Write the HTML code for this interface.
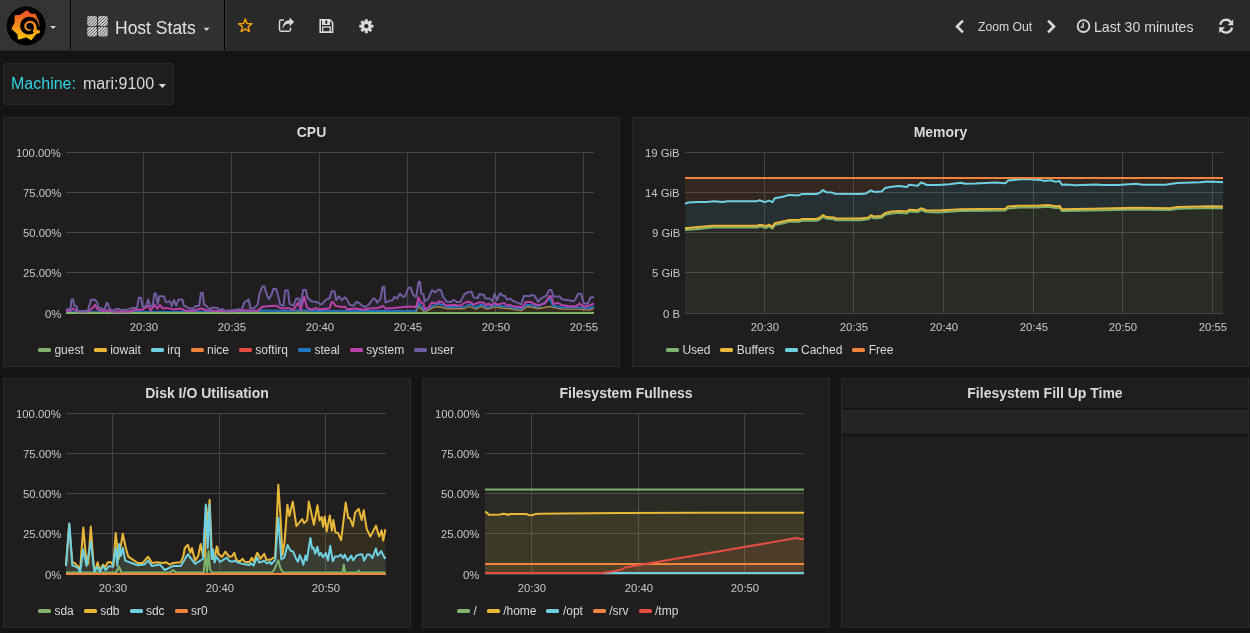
<!DOCTYPE html><html><head><meta charset="utf-8"><style>
*{margin:0;padding:0;box-sizing:border-box}
html,body{width:1250px;height:633px;overflow:hidden;background:#141414;font-family:"Liberation Sans", sans-serif;color:#d8d9da}
.a{position:absolute}
.t{position:absolute;white-space:nowrap;line-height:1;will-change:transform}
.panel{position:absolute;background:#1f1d1e;border:1px solid #292929}
.ptitle{position:absolute;left:0;right:0;text-align:center;font-weight:bold;font-size:14px;color:#d8d9da;line-height:1;will-change:transform}
.yl{position:absolute;font-size:11.33px;color:#c8c8c8;text-align:right;white-space:nowrap;line-height:1;will-change:transform}
.xl{position:absolute;font-size:11.33px;color:#c8c8c8;text-align:center;white-space:nowrap;line-height:1;width:40px;will-change:transform}
.leg{position:absolute;font-size:12px;color:#d8d9da;white-space:nowrap;line-height:1}
.sw{position:absolute;height:4px;width:14px;border-radius:2px}
svg{position:absolute;left:0;top:0;overflow:visible}
.legend{position:absolute;white-space:nowrap;font-size:12px;line-height:14px;color:#d8d9da;will-change:transform}
.li{display:inline-block;margin-right:10px}
.li i{display:inline-block;width:13px;height:4px;border-radius:1.5px;margin-right:3.4px;vertical-align:2px}
</style></head><body>

<div class="a" style="left:0;top:0;width:1250px;height:51px;background:#292929"></div>
<div class="a" style="left:0;top:0;width:70px;height:50px;background:#333"></div>
<div class="a" style="left:70px;top:0;width:1px;height:50px;background:#000"></div>
<div class="a" style="left:71px;top:0;width:153px;height:50px;background:#313131"></div>
<div class="a" style="left:224px;top:0;width:1px;height:50px;background:#000"></div>
<div class="a" style="left:225px;top:0;width:1px;height:50px;background:#303030"></div>
<div class="a" style="left:71px;top:0;width:1px;height:50px;background:#393939"></div>
<svg width="1250" height="51" viewBox="0 0 1250 51">
<defs><linearGradient id="lg" gradientUnits="userSpaceOnUse" x1="0" y1="11" x2="0" y2="40"><stop offset="0.1" stop-color="#F05A28"/><stop offset="1" stop-color="#FBCA0A"/></linearGradient>
<pattern id="hatch" width="2.2" height="2.2" patternUnits="userSpaceOnUse" patternTransform="rotate(45)"><rect width="2.2" height="2.2" fill="#d8d9da"/><rect width="0.8" height="2.2" fill="#555"/></pattern></defs>
<circle cx="26.2" cy="26" r="19.5" fill="#000"/>
<path fill="url(#lg)" stroke="url(#lg)" stroke-width="1.4" stroke-linejoin="round" d="M26.9,10.9 L30.4,14.3 L35.2,14.5 L36.4,17.8 L38.1,21.2 L38.8,24.8 L38.0,27.6 L39.3,32.3 L35.8,33.6 L31.2,39.4 L26.6,36.6 L18.8,38.9 L17.9,33.6 L12.2,28.6 L15.2,23.2 L15.2,16 L20.5,15.4 Z"/>
<circle cx="28.90" cy="25.70" r="8.90" fill="#000"/>
<path fill="#000" d="M29.68,16.83 L30.10,16.85 L30.53,16.88 L30.96,16.93 L31.39,17.01 L31.82,17.11 L32.24,17.22 L32.66,17.36 L33.07,17.52 L33.47,17.70 L33.87,17.90 L34.26,18.12 L34.64,18.36 L35.01,18.61 L35.36,18.89 L35.71,19.18 L36.04,19.49 L36.36,19.82 L36.66,20.17 L36.94,20.53 L37.21,20.90 L37.46,21.29 L37.69,21.69 L37.90,22.11 L38.10,22.53 L38.27,22.97 L38.42,23.41 L38.55,23.87 L38.66,24.33 L38.74,24.80 L38.80,25.27 L38.85,25.74 L38.86,26.22 L38.91,26.71 L39.05,27.22 L39.17,27.74 L39.26,28.28 L39.32,28.84 L39.35,29.40 L39.35,29.98 L39.32,30.56 L35.24,28.66 L35.38,28.35 L35.50,28.04 L35.60,27.72 L35.69,27.39 L35.77,27.07 L35.82,26.73 L35.86,26.40 L35.89,26.07 L35.90,25.73 L35.89,25.39 L35.87,25.06 L35.83,24.73 L35.78,24.39 L35.71,24.07 L35.62,23.74 L35.52,23.42 L35.40,23.11 L35.27,22.80 L35.12,22.49 L34.96,22.20 L34.79,21.91 L34.60,21.64 L34.40,21.37 L34.18,21.11 L33.96,20.86 L33.72,20.62 L33.47,20.40 L33.21,20.18 L32.94,19.98 L32.66,19.80 L32.37,19.62 L32.08,19.46 L31.78,19.32 L31.47,19.19 L31.15,19.07 L30.83,18.97 L30.50,18.89 L30.18,18.82 L29.84,18.76 L29.51,18.73Z"/>
<path fill="url(#lg)" d="M34.95,34.38 L35.30,33.64 L35.58,32.89 L35.77,32.15 L36.01,31.51 L36.26,30.91 L36.45,30.30 L36.59,29.68 L36.68,29.07 L36.72,28.47 L36.70,27.87 L36.64,27.29 L36.53,26.72 L36.44,26.18 L36.33,25.64 L36.17,25.12 L35.98,24.62 L35.75,24.14 L35.48,23.68 L35.18,23.25 L34.85,22.85 L34.49,22.48 L34.11,22.14 L33.71,21.84 L33.29,21.57 L32.85,21.34 L32.40,21.15 L31.94,20.99 L31.47,20.88 L31.00,20.80 L30.53,20.76 L30.06,20.75 L29.60,20.79 L29.15,20.83 L28.70,20.91 L28.26,21.02 L27.84,21.16 L27.43,21.34 L27.03,21.54 L26.66,21.78 L26.31,22.04 L25.98,22.33 L25.67,22.64 L25.40,22.97 L25.15,23.32 L24.93,23.69 L24.74,24.07 L24.59,24.46 L24.46,24.87 L24.37,25.27 L24.31,25.69 L24.29,26.10 L24.29,26.51 L24.35,26.92 L24.43,27.31 L24.55,27.70 L24.70,28.07 L24.87,28.42 L25.07,28.76 L25.30,29.08 L25.54,29.37 L25.81,29.64 L26.09,29.89 L26.39,30.11 L26.71,30.31 L27.03,30.47 L27.37,30.61 L27.71,30.72 L28.05,30.81 L28.40,30.86 L28.74,30.89 L29.09,30.89 L29.43,30.86 L29.76,30.77 L30.07,30.65 L30.37,30.51 L30.64,30.34 L30.90,30.15 L31.14,29.95 L31.35,29.74 L31.54,29.51 L31.36,29.26 L31.12,29.34 L30.87,29.41 L30.62,29.44 L30.38,29.46 L30.13,29.46 L29.90,29.44 L29.67,29.39 L29.45,29.35 L29.23,29.36 L29.01,29.36 L28.79,29.33 L28.57,29.29 L28.36,29.23 L28.14,29.15 L27.94,29.06 L27.73,28.94 L27.54,28.82 L27.36,28.67 L27.18,28.51 L27.02,28.34 L26.87,28.15 L26.74,27.95 L26.62,27.73 L26.52,27.51 L26.44,27.28 L26.37,27.04 L26.32,26.79 L26.30,26.54 L26.29,26.29 L26.30,26.04 L26.34,25.78 L26.39,25.53 L26.47,25.28 L26.56,25.04 L26.68,24.80 L26.81,24.58 L26.97,24.36 L27.14,24.15 L27.32,23.96 L27.52,23.78 L27.74,23.61 L27.97,23.47 L28.22,23.34 L28.47,23.23 L28.73,23.14 L29.00,23.07 L29.28,23.02 L29.56,22.99 L29.85,22.98 L30.14,22.99 L30.43,23.02 L30.71,23.08 L31.00,23.15 L31.28,23.26 L31.55,23.38 L31.81,23.53 L32.07,23.70 L32.31,23.89 L32.54,24.10 L32.75,24.32 L32.94,24.57 L33.12,24.83 L33.27,25.11 L33.41,25.41 L33.52,25.71 L33.61,26.02 L33.67,26.35 L33.72,26.67 L33.78,27.01 L33.82,27.36 L33.83,27.72 L33.81,28.08 L33.76,28.45 L33.67,28.82 L33.56,29.18 L33.41,29.55 L33.26,29.93 L33.15,30.38 L32.98,30.82 L32.77,31.27Z"/>
<path d="M50,26 L56,26 L53,29 Z" fill="#d8d9da"/>
<rect x="87.2" y="16.1" width="9.8" height="9.9" rx="2" fill="url(#hatch)"/>
<rect x="98" y="16.1" width="9.8" height="9.9" rx="2" fill="url(#hatch)"/>
<rect x="87.2" y="26.8" width="9.8" height="9.6" rx="2" fill="url(#hatch)"/>
<rect x="98" y="26.8" width="9.8" height="9.6" rx="2" fill="url(#hatch)"/>
<path d="M203.6,27.8 L209.5,27.8 L206.55,30.9 Z" fill="#d8d9da"/>
<path d="M245.30,18.90 L247.06,23.47 L251.96,23.74 L248.15,26.83 L249.41,31.56 L245.30,28.90 L241.19,31.56 L242.45,26.83 L238.64,23.74 L243.54,23.47 Z" fill="none" stroke="#F1A20B" stroke-width="1.5" stroke-linejoin="round"/>
<path d="M290.5,27.5 L290.5,29.5 Q290.5,31.2 288.8,31.2 L281.2,31.2 Q279.5,31.2 279.5,29.5 L279.5,21.7 Q279.5,20 281.2,20 L284,20" fill="none" stroke="#d8d9da" stroke-width="1.5"/>
<path d="M282.6,29.8 C282.3,24.5 284.5,20.3 289.6,20.3 L289.6,17.6 L294.2,22 L289.6,26.2 L289.6,23.8 C285.8,23.7 283.6,25.6 282.6,29.8 Z" fill="#d8d9da"/>
<path d="M320.2,19.7 L329.8,19.7 L332.6,22.5 L332.6,32.3 L320.2,32.3 Z" fill="none" stroke="#d8d9da" stroke-width="1.6"/>
<rect x="322" y="19.5" width="8" height="5.5" fill="#d8d9da"/>
<rect x="325.3" y="20.5" width="2" height="3.3" fill="#292929"/>
<rect x="322.7" y="27" width="7.5" height="5" fill="none" stroke="#d8d9da" stroke-width="1.3"/>
<g transform="translate(366.3,26.2)" fill="#d8d9da">
<circle r="5.1"/>
<g id="tooth"><rect x="-1.5" y="-7.0" width="3.0" height="3.3" rx="0.5"/></g>
<use href="#tooth" transform="rotate(45)"/><use href="#tooth" transform="rotate(90)"/><use href="#tooth" transform="rotate(135)"/>
<use href="#tooth" transform="rotate(180)"/><use href="#tooth" transform="rotate(225)"/><use href="#tooth" transform="rotate(270)"/><use href="#tooth" transform="rotate(315)"/>
<circle r="2.1" fill="#292929"/>
</g>
<path d="M962,21.5 L957,26.5 L962,31.5" fill="none" stroke="#d8d9da" stroke-width="2.6" stroke-linecap="square" stroke-linejoin="miter"/>
<path d="M1049,21.5 L1054,26.5 L1049,31.5" fill="none" stroke="#d8d9da" stroke-width="2.6" stroke-linecap="square" stroke-linejoin="miter"/>
<circle cx="1083.5" cy="26.1" r="5.9" fill="none" stroke="#d8d9da" stroke-width="1.8"/>
<path d="M1083.2,22.6 L1083.2,27 L1080.6,27" fill="none" stroke="#d8d9da" stroke-width="1.3"/>
<path d="M1220.3,24.8 A6,6 0 0 1 1231,22.2" fill="none" stroke="#d8d9da" stroke-width="2.3"/>
<path d="M1233.2,19.5 L1233.2,25.2 L1227.5,25.2 Z" fill="#d8d9da"/>
<path d="M1232,27.5 A6,6 0 0 1 1221.3,30.2" fill="none" stroke="#d8d9da" stroke-width="2.3"/>
<path d="M1219.2,33 L1219.2,27.2 L1225,27.2 Z" fill="#d8d9da"/>
</svg>
<div class="t" style="left:115px;top:19.5px;font-size:17.5px;color:#e3e3e3">Host Stats</div>
<div class="t" style="left:978px;top:21px;font-size:12.2px;color:#d8d9da">Zoom Out</div>
<div class="t" style="left:1094px;top:20px;font-size:14.1px;color:#d8d9da">Last 30 minutes</div>
<div class="a" style="left:3px;top:63px;width:171px;height:42px;background:#1f1d1e;border:1px solid #292929;border-radius:3px"></div>
<div class="t" style="left:11px;top:76px;font-size:16px;color:#32D1DF">Machine:</div>
<div class="t" style="left:83px;top:76px;font-size:16px;color:#d8d9da">mari:9100</div>
<svg width="1250" height="120"><path d="M158.7,84 L166,84 L162.35,88 Z" fill="#d8d9da"/></svg>
<div class="panel" style="left:3px;top:117px;width:617px;height:250px"></div>
<div class="ptitle" style="left:3px;width:617px;top:125px">CPU</div>
<div class="panel" style="left:632px;top:117px;width:617px;height:250px"></div>
<div class="ptitle" style="left:632px;width:617px;top:125px">Memory</div>
<div class="panel" style="left:3px;top:378px;width:408px;height:250px"></div>
<div class="ptitle" style="left:3px;width:408px;top:386px">Disk I/O Utilisation</div>
<div class="panel" style="left:422px;top:378px;width:408px;height:250px"></div>
<div class="ptitle" style="left:422px;width:408px;top:386px">Filesystem Fullness</div>
<div class="panel" style="left:841px;top:378px;width:408px;height:250px"></div>
<div class="ptitle" style="left:841px;width:408px;top:386px">Filesystem Fill Up Time</div>
<svg width="1250" height="633" viewBox="0 0 1250 633">
<rect x="66" y="152" width="528" height="1" fill="#444444"/>
<rect x="66" y="192" width="528" height="1" fill="#444444"/>
<rect x="66" y="232" width="528" height="1" fill="#444444"/>
<rect x="66" y="272" width="528" height="1" fill="#444444"/>
<rect x="66" y="313" width="528" height="1" fill="#444444"/>
<rect x="143" y="152" width="1" height="161" fill="#444444"/>
<rect x="231" y="152" width="1" height="161" fill="#444444"/>
<rect x="319" y="152" width="1" height="161" fill="#444444"/>
<rect x="407" y="152" width="1" height="161" fill="#444444"/>
<rect x="495" y="152" width="1" height="161" fill="#444444"/>
<rect x="583" y="152" width="1" height="161" fill="#444444"/>
<polygon points="66.0,309.6 70.4,309.0 71.5,299.5 73.2,299.5 74.3,305.7 76.6,306.2 77.7,311.3 87.8,310.7 91.0,299.7 94.5,299.7 97.3,302.3 98.4,307.4 100.6,307.9 104.5,309.6 106.8,302.9 107.9,303.5 109.6,309.0 111.8,309.6 113.5,311.6 115.8,309.0 118.0,309.0 121.4,310.2 128.0,309.4 132.5,307.9 137.0,307.9 138.7,297.8 141.0,297.8 142.6,306.8 146.0,306.2 148.2,299.5 150.5,306.2 152.7,306.2 154.4,293.4 156.0,293.4 157.7,304.0 159.4,296.2 163.9,296.2 166.0,302.3 170.0,301.2 171.7,306.2 174.0,300.0 176.2,305.7 178.5,299.5 182.4,299.5 184.0,305.7 188.5,307.9 193.0,309.0 195.3,306.2 199.2,305.7 200.9,292.8 202.8,292.8 204.0,304.6 206.2,305.7 209.6,309.6 212.4,307.4 217.4,307.9 219.1,310.2 221.9,309.0 225.2,310.7 232.0,310.2 237.6,309.6 242.0,309.0 244.3,302.3 246.5,301.2 248.8,299.5 250.4,308.5 254.4,307.9 257.7,304.6 259.4,293.9 262.2,286.6 264.4,286.6 266.7,294.5 268.9,299.0 271.1,295.6 273.4,288.9 276.2,288.9 278.4,296.7 280.1,304.6 283.5,305.7 285.1,290.6 288.0,290.6 289.6,304.0 293.5,305.7 296.3,298.4 299.1,298.4 300.8,305.7 303.1,290.0 305.9,290.0 307.5,297.8 311.5,301.2 314.8,301.8 317.1,302.3 321.5,304.6 325.5,300.1 329.4,298.4 331.7,291.3 334.5,291.3 336.2,300.2 339.0,296.3 341.8,300.2 344.6,297.4 346.8,299.1 349.6,304.7 353.5,305.8 356.3,301.9 359.1,303.0 362.5,305.8 365.3,307.0 369.2,304.2 373.1,298.6 375.4,299.1 377.0,302.5 380.4,299.1 382.6,286.8 384.3,286.8 385.4,302.5 389.4,300.8 392.7,300.2 394.4,296.9 397.2,298.6 400.0,293.5 402.8,296.9 405.0,296.3 408.4,287.4 410.6,287.4 413.4,295.2 416.2,296.9 418.5,281.8 420.1,281.8 421.3,293.5 423.5,294.1 424.6,301.4 428.5,298.6 431.9,290.2 435.3,292.4 438.1,289.6 440.9,290.2 443.1,296.9 447.0,301.9 450.9,301.9 453.7,299.7 456.5,301.9 460.5,301.9 464.4,294.1 467.7,292.4 471.5,291.6 473.6,297.5 478.0,298.1 479.0,294.3 483.9,294.8 485.5,298.6 489.8,298.6 492.5,301.3 494.7,293.8 496.9,300.2 500.1,293.2 502.3,295.4 505.0,295.9 507.1,299.7 510.4,298.6 512.5,300.8 516.8,302.4 521.2,304.3 523.9,295.9 529.8,295.9 532.5,294.8 534.7,295.9 538.4,301.9 540.6,298.6 546.0,295.9 549.2,290.0 551.4,290.0 553.6,296.5 560.0,296.5 561.7,299.2 568.7,300.2 573.0,301.3 575.2,299.7 577.9,293.8 581.1,293.8 583.8,303.5 588.1,303.5 590.3,297.5 594.0,297.0 594.0,303.5 589.2,305.6 583.8,306.7 579.5,303.5 576.2,306.2 568.7,306.2 562.2,305.1 557.9,302.9 553.6,304.0 551.4,296.5 549.8,295.9 544.9,303.5 538.4,305.1 533.0,303.5 530.9,301.9 526.0,301.9 522.2,307.3 513.1,306.2 509.3,304.6 507.1,305.6 504.4,302.9 497.4,304.6 494.2,302.9 490.9,305.6 488.8,303.5 485.5,305.1 483.9,302.4 479.0,302.4 473.6,304.6 469.3,301.5 465.5,302.5 459.9,305.8 453.2,304.7 446.5,305.8 442.0,301.9 438.6,301.4 436.4,303.6 431.9,302.5 428.5,307.5 424.6,309.2 423.5,303.6 420.7,302.5 418.5,297.4 416.2,307.0 408.4,306.4 393.8,308.0 385.4,308.6 383.2,305.8 378.2,308.0 369.2,308.6 363.6,309.8 355.8,308.6 347.4,309.2 344.6,306.4 341.2,307.0 335.6,305.8 332.8,301.9 331.6,302.3 329.4,308.5 318.2,309.6 315.9,307.9 311.5,309.6 307.0,307.4 304.2,296.7 300.8,309.6 298.0,302.9 293.5,309.6 288.0,307.9 284.6,308.5 280.1,307.9 276.0,305.7 273.4,305.7 262.2,306.8 257.7,310.7 242.0,310.2 232.0,311.6 212.9,310.7 206.2,310.2 201.2,308.5 194.1,310.7 185.2,310.7 180.7,308.5 174.0,309.6 166.7,307.9 162.8,308.5 160.0,305.1 157.2,308.5 154.4,304.6 150.5,310.7 148.2,305.7 142.6,309.6 133.7,310.2 129.2,311.8 111.8,311.8 107.9,310.2 104.6,311.3 97.8,309.6 95.0,304.9 92.2,308.5 87.8,311.6 77.7,311.6 73.2,308.5 71.0,310.2 66.0,311.3" fill="#705DA0" fill-opacity="0.1"/>
<polygon points="66.0,311.3 71.0,310.2 73.2,308.5 77.7,311.6 87.8,311.6 92.2,308.5 95.0,304.9 97.8,309.6 104.6,311.3 107.9,310.2 111.8,311.8 129.2,311.8 133.7,310.2 142.6,309.6 148.2,305.7 150.5,310.7 154.4,304.6 157.2,308.5 160.0,305.1 162.8,308.5 166.7,307.9 174.0,309.6 180.7,308.5 185.2,310.7 194.1,310.7 201.2,308.5 206.2,310.2 212.9,310.7 232.0,311.6 242.0,310.2 257.7,310.7 262.2,306.8 273.4,305.7 276.0,305.7 280.1,307.9 284.6,308.5 288.0,307.9 293.5,309.6 298.0,302.9 300.8,309.6 304.2,296.7 307.0,307.4 311.5,309.6 315.9,307.9 318.2,309.6 329.4,308.5 331.6,302.3 332.8,301.9 335.6,305.8 341.2,307.0 344.6,306.4 347.4,309.2 355.8,308.6 363.6,309.8 369.2,308.6 378.2,308.0 383.2,305.8 385.4,308.6 393.8,308.0 408.4,306.4 416.2,307.0 418.5,297.4 420.7,302.5 423.5,303.6 424.6,309.2 428.5,307.5 431.9,302.5 436.4,303.6 438.6,301.4 442.0,301.9 446.5,305.8 453.2,304.7 459.9,305.8 465.5,302.5 469.3,301.5 473.6,304.6 479.0,302.4 483.9,302.4 485.5,305.1 488.8,303.5 490.9,305.6 494.2,302.9 497.4,304.6 504.4,302.9 507.1,305.6 509.3,304.6 513.1,306.2 522.2,307.3 526.0,301.9 530.9,301.9 533.0,303.5 538.4,305.1 544.9,303.5 549.8,295.9 551.4,296.5 553.6,304.0 557.9,302.9 562.2,305.1 568.7,306.2 576.2,306.2 579.5,303.5 583.8,306.7 589.2,305.6 594.0,303.5 594.0,306.7 589.2,308.3 578.4,307.3 562.2,307.3 552.5,305.6 550.3,298.6 538.4,306.7 527.6,304.6 521.2,308.9 508.2,306.7 501.7,306.2 495.2,305.1 487.0,307.3 481.2,304.6 475.8,307.3 469.3,304.3 465.0,306.7 447.6,307.0 438.6,303.6 433.0,305.8 424.6,310.3 418.5,303.0 416.0,310.8 380.0,311.0 330.0,310.8 318.0,311.0 300.0,310.2 290.0,310.8 262.0,310.5 250.0,311.8 200.0,312.0 150.0,311.8 120.0,312.2 66.0,312.2" fill="#BA43A9" fill-opacity="0.1"/>
<polygon points="66.0,312.2 120.0,312.2 150.0,311.8 200.0,312.0 250.0,311.8 262.0,310.5 290.0,310.8 300.0,310.2 318.0,311.0 330.0,310.8 380.0,311.0 416.0,310.8 418.5,303.0 424.6,310.3 433.0,305.8 438.6,303.6 447.6,307.0 465.0,306.7 469.3,304.3 475.8,307.3 481.2,304.6 487.0,307.3 495.2,305.1 501.7,306.2 508.2,306.7 521.2,308.9 527.6,304.6 538.4,306.7 550.3,298.6 552.5,305.6 562.2,307.3 578.4,307.3 589.2,308.3 594.0,306.7 594.0,308.5 589.2,310.1 578.4,309.1 562.2,309.1 552.5,307.4 550.3,306.5 538.4,308.5 527.6,306.5 521.2,310.7 508.2,308.5 501.7,308.0 495.2,306.9 487.0,309.1 481.2,306.5 475.8,309.1 469.3,306.5 465.0,308.5 447.6,308.8 438.6,306.5 433.0,307.6 424.6,312.1 418.5,306.5 416.0,312.5 380.0,312.5 330.0,312.5 318.0,312.5 300.0,312.0 290.0,312.5 262.0,312.3 250.0,312.5 200.0,312.5 150.0,312.5 120.0,312.5 66.0,312.5" fill="#1F78C1" fill-opacity="0.1"/>
<polygon points="66.0,313.0 66.0,312.5 120.0,312.5 150.0,312.5 200.0,312.5 250.0,312.5 262.0,312.3 290.0,312.5 300.0,312.0 318.0,312.5 330.0,312.5 380.0,312.5 416.0,312.5 418.5,306.5 424.6,312.1 433.0,307.6 438.6,306.5 447.6,308.8 465.0,308.5 469.3,306.5 475.8,309.1 481.2,306.5 487.0,309.1 495.2,306.9 501.7,308.0 508.2,308.5 521.2,310.7 527.6,306.5 538.4,308.5 550.3,306.5 552.5,307.4 562.2,309.1 578.4,309.1 589.2,310.1 594.0,308.5 594.0,313.0" fill="#EAB839" fill-opacity="0.1"/>
<polyline points="66.0,312.5 120.0,312.5 150.0,312.5 200.0,312.5 250.0,312.5 262.0,312.3 290.0,312.5 300.0,312.0 318.0,312.5 330.0,312.5 380.0,312.5 416.0,312.5 418.5,306.5 424.6,312.1 433.0,307.6 438.6,306.5 447.6,308.8 465.0,308.5 469.3,306.5 475.8,309.1 481.2,306.5 487.0,309.1 495.2,306.9 501.7,308.0 508.2,308.5 521.2,310.7 527.6,306.5 538.4,308.5 550.3,306.5 552.5,307.4 562.2,309.1 578.4,309.1 589.2,310.1 594.0,308.5" fill="none" stroke="#a88a55" stroke-width="1.3" stroke-linejoin="round"/>
<polyline points="66.0,312.2 120.0,312.2 150.0,311.8 200.0,312.0 250.0,311.8 262.0,310.5 290.0,310.8 300.0,310.2 318.0,311.0 330.0,310.8 380.0,311.0 416.0,310.8 418.5,303.0 424.6,310.3 433.0,305.8 438.6,303.6 447.6,307.0 465.0,306.7 469.3,304.3 475.8,307.3 481.2,304.6 487.0,307.3 495.2,305.1 501.7,306.2 508.2,306.7 521.2,308.9 527.6,304.6 538.4,306.7 550.3,298.6 552.5,305.6 562.2,307.3 578.4,307.3 589.2,308.3 594.0,306.7" fill="none" stroke="#1F78C1" stroke-width="1.8" stroke-linejoin="round"/>
<polyline points="66.0,313.0 594.0,313.0" fill="none" stroke="#7EB26D" stroke-width="2" stroke-linejoin="round"/>
<polyline points="66.0,311.3 71.0,310.2 73.2,308.5 77.7,311.6 87.8,311.6 92.2,308.5 95.0,304.9 97.8,309.6 104.6,311.3 107.9,310.2 111.8,311.8 129.2,311.8 133.7,310.2 142.6,309.6 148.2,305.7 150.5,310.7 154.4,304.6 157.2,308.5 160.0,305.1 162.8,308.5 166.7,307.9 174.0,309.6 180.7,308.5 185.2,310.7 194.1,310.7 201.2,308.5 206.2,310.2 212.9,310.7 232.0,311.6 242.0,310.2 257.7,310.7 262.2,306.8 273.4,305.7 276.0,305.7 280.1,307.9 284.6,308.5 288.0,307.9 293.5,309.6 298.0,302.9 300.8,309.6 304.2,296.7 307.0,307.4 311.5,309.6 315.9,307.9 318.2,309.6 329.4,308.5 331.6,302.3 332.8,301.9 335.6,305.8 341.2,307.0 344.6,306.4 347.4,309.2 355.8,308.6 363.6,309.8 369.2,308.6 378.2,308.0 383.2,305.8 385.4,308.6 393.8,308.0 408.4,306.4 416.2,307.0 418.5,297.4 420.7,302.5 423.5,303.6 424.6,309.2 428.5,307.5 431.9,302.5 436.4,303.6 438.6,301.4 442.0,301.9 446.5,305.8 453.2,304.7 459.9,305.8 465.5,302.5 469.3,301.5 473.6,304.6 479.0,302.4 483.9,302.4 485.5,305.1 488.8,303.5 490.9,305.6 494.2,302.9 497.4,304.6 504.4,302.9 507.1,305.6 509.3,304.6 513.1,306.2 522.2,307.3 526.0,301.9 530.9,301.9 533.0,303.5 538.4,305.1 544.9,303.5 549.8,295.9 551.4,296.5 553.6,304.0 557.9,302.9 562.2,305.1 568.7,306.2 576.2,306.2 579.5,303.5 583.8,306.7 589.2,305.6 594.0,303.5" fill="none" stroke="#BA43A9" stroke-width="2" stroke-linejoin="round"/>
<polyline points="66.0,309.6 70.4,309.0 71.5,299.5 73.2,299.5 74.3,305.7 76.6,306.2 77.7,311.3 87.8,310.7 91.0,299.7 94.5,299.7 97.3,302.3 98.4,307.4 100.6,307.9 104.5,309.6 106.8,302.9 107.9,303.5 109.6,309.0 111.8,309.6 113.5,311.6 115.8,309.0 118.0,309.0 121.4,310.2 128.0,309.4 132.5,307.9 137.0,307.9 138.7,297.8 141.0,297.8 142.6,306.8 146.0,306.2 148.2,299.5 150.5,306.2 152.7,306.2 154.4,293.4 156.0,293.4 157.7,304.0 159.4,296.2 163.9,296.2 166.0,302.3 170.0,301.2 171.7,306.2 174.0,300.0 176.2,305.7 178.5,299.5 182.4,299.5 184.0,305.7 188.5,307.9 193.0,309.0 195.3,306.2 199.2,305.7 200.9,292.8 202.8,292.8 204.0,304.6 206.2,305.7 209.6,309.6 212.4,307.4 217.4,307.9 219.1,310.2 221.9,309.0 225.2,310.7 232.0,310.2 237.6,309.6 242.0,309.0 244.3,302.3 246.5,301.2 248.8,299.5 250.4,308.5 254.4,307.9 257.7,304.6 259.4,293.9 262.2,286.6 264.4,286.6 266.7,294.5 268.9,299.0 271.1,295.6 273.4,288.9 276.2,288.9 278.4,296.7 280.1,304.6 283.5,305.7 285.1,290.6 288.0,290.6 289.6,304.0 293.5,305.7 296.3,298.4 299.1,298.4 300.8,305.7 303.1,290.0 305.9,290.0 307.5,297.8 311.5,301.2 314.8,301.8 317.1,302.3 321.5,304.6 325.5,300.1 329.4,298.4 331.7,291.3 334.5,291.3 336.2,300.2 339.0,296.3 341.8,300.2 344.6,297.4 346.8,299.1 349.6,304.7 353.5,305.8 356.3,301.9 359.1,303.0 362.5,305.8 365.3,307.0 369.2,304.2 373.1,298.6 375.4,299.1 377.0,302.5 380.4,299.1 382.6,286.8 384.3,286.8 385.4,302.5 389.4,300.8 392.7,300.2 394.4,296.9 397.2,298.6 400.0,293.5 402.8,296.9 405.0,296.3 408.4,287.4 410.6,287.4 413.4,295.2 416.2,296.9 418.5,281.8 420.1,281.8 421.3,293.5 423.5,294.1 424.6,301.4 428.5,298.6 431.9,290.2 435.3,292.4 438.1,289.6 440.9,290.2 443.1,296.9 447.0,301.9 450.9,301.9 453.7,299.7 456.5,301.9 460.5,301.9 464.4,294.1 467.7,292.4 471.5,291.6 473.6,297.5 478.0,298.1 479.0,294.3 483.9,294.8 485.5,298.6 489.8,298.6 492.5,301.3 494.7,293.8 496.9,300.2 500.1,293.2 502.3,295.4 505.0,295.9 507.1,299.7 510.4,298.6 512.5,300.8 516.8,302.4 521.2,304.3 523.9,295.9 529.8,295.9 532.5,294.8 534.7,295.9 538.4,301.9 540.6,298.6 546.0,295.9 549.2,290.0 551.4,290.0 553.6,296.5 560.0,296.5 561.7,299.2 568.7,300.2 573.0,301.3 575.2,299.7 577.9,293.8 581.1,293.8 583.8,303.5 588.1,303.5 590.3,297.5 594.0,297.0" fill="none" stroke="#705DA0" stroke-width="2" stroke-linejoin="round"/>
</svg>
<div class="yl" style="right:1189.0px;top:147.5px">100.00%</div>
<div class="yl" style="right:1189.0px;top:187.5px">75.00%</div>
<div class="yl" style="right:1189.0px;top:227.5px">50.00%</div>
<div class="yl" style="right:1189.0px;top:267.5px">25.00%</div>
<div class="yl" style="right:1189.0px;top:308.5px">0%</div>
<div class="xl" style="left:123.5px;top:322.0px">20:30</div>
<div class="xl" style="left:211.5px;top:322.0px">20:35</div>
<div class="xl" style="left:299.5px;top:322.0px">20:40</div>
<div class="xl" style="left:387.5px;top:322.0px">20:45</div>
<div class="xl" style="left:475.5px;top:322.0px">20:50</div>
<div class="xl" style="left:563.5px;top:322.0px">20:55</div>
<div class="legend" style="left:37.5px;top:343.0px"><span class="li"><i style="background:#7EB26D"></i>guest</span><span class="li"><i style="background:#EAB839"></i>iowait</span><span class="li"><i style="background:#6ED0E0"></i>irq</span><span class="li"><i style="background:#EF843C"></i>nice</span><span class="li"><i style="background:#E24D42"></i>softirq</span><span class="li"><i style="background:#1F78C1"></i>steal</span><span class="li"><i style="background:#BA43A9"></i>system</span><span class="li"><i style="background:#705DA0"></i>user</span></div>
<svg width="1250" height="633" viewBox="0 0 1250 633">
<rect x="685" y="152" width="538" height="1" fill="#444444"/>
<rect x="685" y="192" width="538" height="1" fill="#444444"/>
<rect x="685" y="232" width="538" height="1" fill="#444444"/>
<rect x="685" y="272" width="538" height="1" fill="#444444"/>
<rect x="685" y="313" width="538" height="1" fill="#444444"/>
<rect x="764" y="152" width="1" height="161" fill="#444444"/>
<rect x="853" y="152" width="1" height="161" fill="#444444"/>
<rect x="943" y="152" width="1" height="161" fill="#444444"/>
<rect x="1033" y="152" width="1" height="161" fill="#444444"/>
<rect x="1122" y="152" width="1" height="161" fill="#444444"/>
<rect x="1212" y="152" width="1" height="161" fill="#444444"/>
<polygon points="685.0,313.0 685.0,230.1 698.4,228.9 712.8,227.5 757.4,227.5 759.6,226.5 766.1,227.9 769.0,226.5 772.6,228.6 774.7,225.0 784.8,222.9 789.1,221.7 799.2,221.7 802.1,220.7 816.5,220.7 820.1,219.3 823.0,216.8 826.6,218.8 833.8,219.3 835.9,220.3 860.0,220.2 868.6,219.2 870.8,217.0 874.4,218.4 881.6,217.7 885.2,214.8 891.7,213.4 898.9,212.7 906.8,213.4 909.0,211.5 917.6,212.0 921.2,210.1 926.2,212.0 937.8,212.4 960.8,211.0 1005.4,210.5 1007.6,208.4 1018.4,207.6 1036.0,207.5 1048.2,206.8 1055.8,208.0 1059.6,207.7 1061.8,211.0 1092.2,210.6 1134.8,209.5 1169.8,210.1 1177.4,208.7 1210.8,208.0 1223.0,208.3 1223.0,313.0" fill="#7EB26D" fill-opacity="0.1"/>
<polygon points="685.0,228.3 698.4,227.1 712.8,225.7 757.4,225.7 759.6,224.7 766.1,226.1 769.0,224.7 772.6,226.8 774.7,223.2 784.8,221.1 789.1,219.9 799.2,219.9 802.1,218.9 816.5,218.9 820.1,217.5 823.0,215.0 826.6,217.0 833.8,217.5 835.9,218.5 860.0,218.4 868.6,217.4 870.8,215.2 874.4,216.6 881.6,215.9 885.2,213.0 891.7,211.6 898.9,210.9 906.8,211.6 909.0,209.7 917.6,210.2 921.2,208.3 926.2,210.2 937.8,210.6 960.8,209.2 1005.4,208.7 1007.6,206.6 1018.4,205.8 1036.0,205.7 1048.2,205.0 1055.8,206.2 1059.6,205.9 1061.8,209.2 1092.2,208.8 1134.8,207.7 1169.8,208.3 1177.4,206.9 1210.8,206.2 1223.0,206.5 1223.0,208.3 1210.8,208.0 1177.4,208.7 1169.8,210.1 1134.8,209.5 1092.2,210.6 1061.8,211.0 1059.6,207.7 1055.8,208.0 1048.2,206.8 1036.0,207.5 1018.4,207.6 1007.6,208.4 1005.4,210.5 960.8,211.0 937.8,212.4 926.2,212.0 921.2,210.1 917.6,212.0 909.0,211.5 906.8,213.4 898.9,212.7 891.7,213.4 885.2,214.8 881.6,217.7 874.4,218.4 870.8,217.0 868.6,219.2 860.0,220.2 835.9,220.3 833.8,219.3 826.6,218.8 823.0,216.8 820.1,219.3 816.5,220.7 802.1,220.7 799.2,221.7 789.1,221.7 784.8,222.9 774.7,225.0 772.6,228.6 769.0,226.5 766.1,227.9 759.6,226.5 757.4,227.5 712.8,227.5 698.4,228.9 685.0,230.1" fill="#EAB839" fill-opacity="0.1"/>
<polygon points="685.0,203.8 688.3,202.4 698.4,202.1 707.0,202.1 714.2,201.2 722.9,202.1 727.2,201.2 757.4,201.2 759.6,200.2 764.6,202.1 769.0,200.6 772.6,202.1 774.7,198.3 780.5,197.3 784.8,196.3 789.1,194.9 798.5,195.4 802.1,194.0 816.5,194.0 820.1,192.6 823.0,190.1 826.6,192.3 832.3,192.6 835.2,193.7 860.0,193.9 865.8,193.6 870.8,190.4 874.4,191.9 881.6,191.4 885.2,188.1 891.7,186.7 898.9,186.1 906.8,187.1 909.0,184.7 917.6,185.7 921.2,182.4 927.0,185.0 937.8,185.0 949.3,184.2 960.8,182.8 965.1,183.8 975.2,183.5 995.4,182.4 1005.4,183.2 1008.3,180.4 1018.4,179.5 1025.6,178.9 1040.6,179.9 1043.6,180.9 1051.2,180.3 1055.8,181.9 1059.6,180.9 1061.8,184.7 1066.4,184.4 1075.5,185.2 1096.8,184.4 1102.9,184.9 1118.1,184.9 1136.3,183.7 1142.4,184.7 1165.2,184.7 1177.4,182.9 1200.2,182.2 1207.8,181.4 1223.0,182.2 1223.0,206.5 1210.8,206.2 1177.4,206.9 1169.8,208.3 1134.8,207.7 1092.2,208.8 1061.8,209.2 1059.6,205.9 1055.8,206.2 1048.2,205.0 1036.0,205.7 1018.4,205.8 1007.6,206.6 1005.4,208.7 960.8,209.2 937.8,210.6 926.2,210.2 921.2,208.3 917.6,210.2 909.0,209.7 906.8,211.6 898.9,210.9 891.7,211.6 885.2,213.0 881.6,215.9 874.4,216.6 870.8,215.2 868.6,217.4 860.0,218.4 835.9,218.5 833.8,217.5 826.6,217.0 823.0,215.0 820.1,217.5 816.5,218.9 802.1,218.9 799.2,219.9 789.1,219.9 784.8,221.1 774.7,223.2 772.6,226.8 769.0,224.7 766.1,226.1 759.6,224.7 757.4,225.7 712.8,225.7 698.4,227.1 685.0,228.3" fill="#6ED0E0" fill-opacity="0.1"/>
<polygon points="685.0,178.0 1223.0,178.0 1223.0,182.2 1207.8,181.4 1200.2,182.2 1177.4,182.9 1165.2,184.7 1142.4,184.7 1136.3,183.7 1118.1,184.9 1102.9,184.9 1096.8,184.4 1075.5,185.2 1066.4,184.4 1061.8,184.7 1059.6,180.9 1055.8,181.9 1051.2,180.3 1043.6,180.9 1040.6,179.9 1025.6,178.9 1018.4,179.5 1008.3,180.4 1005.4,183.2 995.4,182.4 975.2,183.5 965.1,183.8 960.8,182.8 949.3,184.2 937.8,185.0 927.0,185.0 921.2,182.4 917.6,185.7 909.0,184.7 906.8,187.1 898.9,186.1 891.7,186.7 885.2,188.1 881.6,191.4 874.4,191.9 870.8,190.4 865.8,193.6 860.0,193.9 835.2,193.7 832.3,192.6 826.6,192.3 823.0,190.1 820.1,192.6 816.5,194.0 802.1,194.0 798.5,195.4 789.1,194.9 784.8,196.3 780.5,197.3 774.7,198.3 772.6,202.1 769.0,200.6 764.6,202.1 759.6,200.2 757.4,201.2 727.2,201.2 722.9,202.1 714.2,201.2 707.0,202.1 698.4,202.1 688.3,202.4 685.0,203.8" fill="#EF843C" fill-opacity="0.1"/>
<polyline points="685.0,230.1 698.4,228.9 712.8,227.5 757.4,227.5 759.6,226.5 766.1,227.9 769.0,226.5 772.6,228.6 774.7,225.0 784.8,222.9 789.1,221.7 799.2,221.7 802.1,220.7 816.5,220.7 820.1,219.3 823.0,216.8 826.6,218.8 833.8,219.3 835.9,220.3 860.0,220.2 868.6,219.2 870.8,217.0 874.4,218.4 881.6,217.7 885.2,214.8 891.7,213.4 898.9,212.7 906.8,213.4 909.0,211.5 917.6,212.0 921.2,210.1 926.2,212.0 937.8,212.4 960.8,211.0 1005.4,210.5 1007.6,208.4 1018.4,207.6 1036.0,207.5 1048.2,206.8 1055.8,208.0 1059.6,207.7 1061.8,211.0 1092.2,210.6 1134.8,209.5 1169.8,210.1 1177.4,208.7 1210.8,208.0 1223.0,208.3" fill="none" stroke="#7EB26D" stroke-width="2" stroke-linejoin="round"/>
<polyline points="685.0,228.3 698.4,227.1 712.8,225.7 757.4,225.7 759.6,224.7 766.1,226.1 769.0,224.7 772.6,226.8 774.7,223.2 784.8,221.1 789.1,219.9 799.2,219.9 802.1,218.9 816.5,218.9 820.1,217.5 823.0,215.0 826.6,217.0 833.8,217.5 835.9,218.5 860.0,218.4 868.6,217.4 870.8,215.2 874.4,216.6 881.6,215.9 885.2,213.0 891.7,211.6 898.9,210.9 906.8,211.6 909.0,209.7 917.6,210.2 921.2,208.3 926.2,210.2 937.8,210.6 960.8,209.2 1005.4,208.7 1007.6,206.6 1018.4,205.8 1036.0,205.7 1048.2,205.0 1055.8,206.2 1059.6,205.9 1061.8,209.2 1092.2,208.8 1134.8,207.7 1169.8,208.3 1177.4,206.9 1210.8,206.2 1223.0,206.5" fill="none" stroke="#EAB839" stroke-width="2" stroke-linejoin="round"/>
<polyline points="685.0,203.8 688.3,202.4 698.4,202.1 707.0,202.1 714.2,201.2 722.9,202.1 727.2,201.2 757.4,201.2 759.6,200.2 764.6,202.1 769.0,200.6 772.6,202.1 774.7,198.3 780.5,197.3 784.8,196.3 789.1,194.9 798.5,195.4 802.1,194.0 816.5,194.0 820.1,192.6 823.0,190.1 826.6,192.3 832.3,192.6 835.2,193.7 860.0,193.9 865.8,193.6 870.8,190.4 874.4,191.9 881.6,191.4 885.2,188.1 891.7,186.7 898.9,186.1 906.8,187.1 909.0,184.7 917.6,185.7 921.2,182.4 927.0,185.0 937.8,185.0 949.3,184.2 960.8,182.8 965.1,183.8 975.2,183.5 995.4,182.4 1005.4,183.2 1008.3,180.4 1018.4,179.5 1025.6,178.9 1040.6,179.9 1043.6,180.9 1051.2,180.3 1055.8,181.9 1059.6,180.9 1061.8,184.7 1066.4,184.4 1075.5,185.2 1096.8,184.4 1102.9,184.9 1118.1,184.9 1136.3,183.7 1142.4,184.7 1165.2,184.7 1177.4,182.9 1200.2,182.2 1207.8,181.4 1223.0,182.2" fill="none" stroke="#6ED0E0" stroke-width="2" stroke-linejoin="round"/>
<polyline points="685.0,178.0 1223.0,178.0" fill="none" stroke="#EF843C" stroke-width="2" stroke-linejoin="round"/>
</svg>
<div class="yl" style="right:570.0px;top:147.5px">19 GiB</div>
<div class="yl" style="right:570.0px;top:187.5px">14 GiB</div>
<div class="yl" style="right:570.0px;top:227.5px">9 GiB</div>
<div class="yl" style="right:570.0px;top:267.5px">5 GiB</div>
<div class="yl" style="right:570.0px;top:308.5px">0 B</div>
<div class="xl" style="left:744.5px;top:322.0px">20:30</div>
<div class="xl" style="left:833.5px;top:322.0px">20:35</div>
<div class="xl" style="left:923.5px;top:322.0px">20:40</div>
<div class="xl" style="left:1013.5px;top:322.0px">20:45</div>
<div class="xl" style="left:1102.5px;top:322.0px">20:50</div>
<div class="xl" style="left:1192.5px;top:322.0px">20:55</div>
<div class="legend" style="left:665.5px;top:343.0px"><span class="li"><i style="background:#7EB26D"></i>Used</span><span class="li"><i style="background:#EAB839"></i>Buffers</span><span class="li"><i style="background:#6ED0E0"></i>Cached</span><span class="li"><i style="background:#EF843C"></i>Free</span></div>
<svg width="1250" height="633" viewBox="0 0 1250 633">
<rect x="66" y="413" width="320" height="1" fill="#444444"/>
<rect x="66" y="453" width="320" height="1" fill="#444444"/>
<rect x="66" y="493" width="320" height="1" fill="#444444"/>
<rect x="66" y="533" width="320" height="1" fill="#444444"/>
<rect x="66" y="574" width="320" height="1" fill="#444444"/>
<rect x="112" y="413" width="1" height="161" fill="#444444"/>
<rect x="219" y="413" width="1" height="161" fill="#444444"/>
<rect x="325" y="413" width="1" height="161" fill="#444444"/>
<polygon points="66.0,574.0 66.0,572.5 112.0,572.5 116.0,572.5 118.9,566.5 121.5,572.5 170.0,572.5 173.0,570.0 176.0,572.5 203.7,572.5 205.5,553.0 207.0,572.0 208.5,551.0 210.0,569.0 212.0,572.5 272.0,572.5 274.0,570.0 278.3,560.3 280.4,568.0 283.0,572.5 342.5,572.5 343.8,564.7 345.2,572.5 357.0,572.5 358.6,570.5 360.0,572.5 385.5,572.5 385.5,574.0" fill="#7EB26D" fill-opacity="0.1"/>
<polygon points="66.0,574.0 66.0,564.6 69.1,524.3 72.3,562.2 74.6,563.0 77.8,566.1 80.2,568.5 83.3,527.4 86.5,563.0 88.1,563.8 90.8,526.6 93.6,564.7 95.2,570.9 97.6,562.2 99.9,570.0 103.1,564.6 105.5,566.9 107.8,562.2 111.0,562.2 113.4,566.1 115.7,533.0 118.6,559.0 122.8,533.7 126.0,548.8 128.4,556.7 133.1,559.8 137.9,563.0 142.6,563.0 148.1,556.7 152.1,563.0 156.8,562.2 163.2,563.0 166.3,562.2 169.7,564.6 172.9,563.0 180.8,562.2 183.2,556.7 184.8,548.0 187.9,544.8 190.3,552.7 191.9,548.0 195.0,560.6 198.2,555.9 200.6,544.0 202.9,555.9 205.0,555.9 206.4,506.9 208.0,527.4 209.6,499.8 211.6,546.4 213.2,559.0 215.3,555.0 216.7,546.3 217.6,548.2 218.3,554.3 219.9,555.0 222.1,556.9 225.5,551.6 227.8,555.0 229.7,556.9 232.0,556.2 234.3,552.7 236.2,559.2 238.4,561.1 240.3,561.1 242.6,558.8 244.9,561.8 249.4,562.2 251.7,557.7 253.6,561.5 257.4,552.7 260.4,558.8 264.2,553.9 266.5,559.9 270.7,559.6 275.2,556.5 278.3,484.8 280.4,515.2 282.5,555.1 284.6,541.6 287.4,504.7 289.4,515.9 292.8,501.6 296.4,526.2 302.1,519.0 304.1,523.1 307.2,520.1 308.8,501.6 313.9,524.7 317.5,505.2 319.5,520.6 321.6,517.0 323.1,526.7 324.7,516.5 326.7,531.4 329.8,515.4 331.9,530.8 333.4,520.1 335.5,532.4 338.0,532.9 341.1,540.1 345.7,502.6 348.3,518.0 349.8,518.0 352.9,526.2 355.0,512.9 358.6,508.8 361.7,520.1 363.7,510.3 366.8,529.3 370.4,536.5 373.0,531.4 376.0,525.7 379.1,536.5 381.7,530.3 383.2,540.6 385.3,529.8 385.5,529.9 385.5,574.0" fill="#EAB839" fill-opacity="0.1"/>
<polygon points="66.0,574.0 66.0,566.1 69.4,523.5 72.3,565.3 77.8,567.7 80.2,571.7 83.3,549.5 86.5,566.1 90.8,541.6 94.4,571.7 97.6,566.9 99.9,571.7 103.1,566.1 105.5,570.1 109.4,566.1 112.6,566.9 115.7,548.0 117.3,565.3 119.2,544.0 120.8,555.9 122.8,548.0 125.2,560.6 131.5,563.0 137.9,565.3 144.2,564.6 148.1,560.6 152.1,566.1 160.0,564.6 164.7,570.0 172.9,566.1 180.8,566.1 187.9,554.3 195.0,563.8 202.9,559.0 205.8,504.5 207.7,548.0 209.6,504.5 211.6,559.0 213.2,549.5 214.5,562.6 216.4,556.5 219.9,561.8 223.6,559.6 227.1,557.7 229.0,560.7 232.0,561.8 235.0,560.7 238.1,562.6 243.4,564.1 249.4,564.9 251.3,563.4 253.6,565.6 257.0,557.3 259.3,562.6 264.2,560.7 266.9,563.4 269.9,561.8 271.4,564.1 275.2,560.0 278.3,517.8 281.3,559.4 281.8,559.0 284.4,557.3 287.5,545.0 290.6,550.7 293.2,551.6 295.8,558.2 298.0,561.7 299.8,555.1 302.0,560.4 303.3,564.8 305.5,555.5 306.8,560.4 310.4,537.9 312.1,548.5 313.5,547.6 315.2,553.8 317.4,546.7 319.2,555.5 320.9,552.9 323.1,557.3 325.8,552.9 328.0,560.4 330.2,545.8 332.8,561.3 335.0,556.4 338.5,556.4 340.7,554.6 343.4,558.2 344.7,554.6 347.8,560.8 351.3,555.5 353.1,560.4 356.6,555.5 359.2,554.6 362.3,554.2 364.1,560.8 367.1,554.6 369.8,554.6 372.4,558.2 375.9,548.5 377.7,555.5 381.2,551.1 384.8,558.2 385.5,557.0 385.5,574.0" fill="#6ED0E0" fill-opacity="0.1"/>
<polyline points="66.0,572.5 112.0,572.5 116.0,572.5 118.9,566.5 121.5,572.5 170.0,572.5 173.0,570.0 176.0,572.5 203.7,572.5 205.5,553.0 207.0,572.0 208.5,551.0 210.0,569.0 212.0,572.5 272.0,572.5 274.0,570.0 278.3,560.3 280.4,568.0 283.0,572.5 342.5,572.5 343.8,564.7 345.2,572.5 357.0,572.5 358.6,570.5 360.0,572.5 385.5,572.5" fill="none" stroke="#7EB26D" stroke-width="2" stroke-linejoin="round"/>
<polyline points="66.0,564.6 69.1,524.3 72.3,562.2 74.6,563.0 77.8,566.1 80.2,568.5 83.3,527.4 86.5,563.0 88.1,563.8 90.8,526.6 93.6,564.7 95.2,570.9 97.6,562.2 99.9,570.0 103.1,564.6 105.5,566.9 107.8,562.2 111.0,562.2 113.4,566.1 115.7,533.0 118.6,559.0 122.8,533.7 126.0,548.8 128.4,556.7 133.1,559.8 137.9,563.0 142.6,563.0 148.1,556.7 152.1,563.0 156.8,562.2 163.2,563.0 166.3,562.2 169.7,564.6 172.9,563.0 180.8,562.2 183.2,556.7 184.8,548.0 187.9,544.8 190.3,552.7 191.9,548.0 195.0,560.6 198.2,555.9 200.6,544.0 202.9,555.9 205.0,555.9 206.4,506.9 208.0,527.4 209.6,499.8 211.6,546.4 213.2,559.0 215.3,555.0 216.7,546.3 217.6,548.2 218.3,554.3 219.9,555.0 222.1,556.9 225.5,551.6 227.8,555.0 229.7,556.9 232.0,556.2 234.3,552.7 236.2,559.2 238.4,561.1 240.3,561.1 242.6,558.8 244.9,561.8 249.4,562.2 251.7,557.7 253.6,561.5 257.4,552.7 260.4,558.8 264.2,553.9 266.5,559.9 270.7,559.6 275.2,556.5 278.3,484.8 280.4,515.2 282.5,555.1 284.6,541.6 287.4,504.7 289.4,515.9 292.8,501.6 296.4,526.2 302.1,519.0 304.1,523.1 307.2,520.1 308.8,501.6 313.9,524.7 317.5,505.2 319.5,520.6 321.6,517.0 323.1,526.7 324.7,516.5 326.7,531.4 329.8,515.4 331.9,530.8 333.4,520.1 335.5,532.4 338.0,532.9 341.1,540.1 345.7,502.6 348.3,518.0 349.8,518.0 352.9,526.2 355.0,512.9 358.6,508.8 361.7,520.1 363.7,510.3 366.8,529.3 370.4,536.5 373.0,531.4 376.0,525.7 379.1,536.5 381.7,530.3 383.2,540.6 385.3,529.8 385.5,529.9" fill="none" stroke="#EAB839" stroke-width="2" stroke-linejoin="round"/>
<polyline points="66.0,566.1 69.4,523.5 72.3,565.3 77.8,567.7 80.2,571.7 83.3,549.5 86.5,566.1 90.8,541.6 94.4,571.7 97.6,566.9 99.9,571.7 103.1,566.1 105.5,570.1 109.4,566.1 112.6,566.9 115.7,548.0 117.3,565.3 119.2,544.0 120.8,555.9 122.8,548.0 125.2,560.6 131.5,563.0 137.9,565.3 144.2,564.6 148.1,560.6 152.1,566.1 160.0,564.6 164.7,570.0 172.9,566.1 180.8,566.1 187.9,554.3 195.0,563.8 202.9,559.0 205.8,504.5 207.7,548.0 209.6,504.5 211.6,559.0 213.2,549.5 214.5,562.6 216.4,556.5 219.9,561.8 223.6,559.6 227.1,557.7 229.0,560.7 232.0,561.8 235.0,560.7 238.1,562.6 243.4,564.1 249.4,564.9 251.3,563.4 253.6,565.6 257.0,557.3 259.3,562.6 264.2,560.7 266.9,563.4 269.9,561.8 271.4,564.1 275.2,560.0 278.3,517.8 281.3,559.4 281.8,559.0 284.4,557.3 287.5,545.0 290.6,550.7 293.2,551.6 295.8,558.2 298.0,561.7 299.8,555.1 302.0,560.4 303.3,564.8 305.5,555.5 306.8,560.4 310.4,537.9 312.1,548.5 313.5,547.6 315.2,553.8 317.4,546.7 319.2,555.5 320.9,552.9 323.1,557.3 325.8,552.9 328.0,560.4 330.2,545.8 332.8,561.3 335.0,556.4 338.5,556.4 340.7,554.6 343.4,558.2 344.7,554.6 347.8,560.8 351.3,555.5 353.1,560.4 356.6,555.5 359.2,554.6 362.3,554.2 364.1,560.8 367.1,554.6 369.8,554.6 372.4,558.2 375.9,548.5 377.7,555.5 381.2,551.1 384.8,558.2 385.5,557.0" fill="none" stroke="#6ED0E0" stroke-width="2" stroke-linejoin="round"/>
<polyline points="66.0,573.9 386.0,573.9" fill="none" stroke="#EF843C" stroke-width="2" stroke-linejoin="round"/>
</svg>
<div class="yl" style="right:1189.0px;top:408.5px">100.00%</div>
<div class="yl" style="right:1189.0px;top:448.5px">75.00%</div>
<div class="yl" style="right:1189.0px;top:488.5px">50.00%</div>
<div class="yl" style="right:1189.0px;top:528.5px">25.00%</div>
<div class="yl" style="right:1189.0px;top:569.5px">0%</div>
<div class="xl" style="left:92.5px;top:583.0px">20:30</div>
<div class="xl" style="left:199.5px;top:583.0px">20:40</div>
<div class="xl" style="left:305.5px;top:583.0px">20:50</div>
<div class="legend" style="left:37.5px;top:604.0px"><span class="li"><i style="background:#7EB26D"></i>sda</span><span class="li"><i style="background:#EAB839"></i>sdb</span><span class="li"><i style="background:#6ED0E0"></i>sdc</span><span class="li"><i style="background:#EF843C"></i>sr0</span></div>
<svg width="1250" height="633" viewBox="0 0 1250 633">
<rect x="485" y="413" width="319" height="1" fill="#444444"/>
<rect x="485" y="453" width="319" height="1" fill="#444444"/>
<rect x="485" y="493" width="319" height="1" fill="#444444"/>
<rect x="485" y="533" width="319" height="1" fill="#444444"/>
<rect x="485" y="574" width="319" height="1" fill="#444444"/>
<rect x="531" y="413" width="1" height="161" fill="#444444"/>
<rect x="638" y="413" width="1" height="161" fill="#444444"/>
<rect x="744" y="413" width="1" height="161" fill="#444444"/>
<polygon points="485.0,574.0 485.0,489.5 804.0,489.5 804.0,574.0" fill="#7EB26D" fill-opacity="0.1"/>
<polygon points="485.0,574.0 485.0,511.5 487.0,512.8 489.0,514.8 495.0,514.8 500.0,514.5 503.0,513.7 506.0,514.0 508.0,515.0 510.0,514.0 526.0,514.0 529.0,515.0 532.0,515.3 535.0,514.1 540.0,513.8 560.0,513.5 620.0,513.1 700.0,512.8 804.0,512.8 804.0,574.0" fill="#EAB839" fill-opacity="0.1"/>
<polygon points="485.0,574.0 485.0,573.0 804.0,573.0 804.0,574.0" fill="#6ED0E0" fill-opacity="0.1"/>
<polygon points="485.0,574.0 485.0,564.0 804.0,564.0 804.0,574.0" fill="#EF843C" fill-opacity="0.1"/>
<polygon points="485.0,574.0 485.0,573.0 602.0,573.0 612.0,571.5 620.5,569.8 625.0,567.6 797.7,537.8 800.5,539.3 804.0,538.8 804.0,574.0" fill="#E24D42" fill-opacity="0.1"/>
<polyline points="485.0,489.5 804.0,489.5" fill="none" stroke="#7EB26D" stroke-width="2" stroke-linejoin="round"/>
<polyline points="485.0,511.5 487.0,512.8 489.0,514.8 495.0,514.8 500.0,514.5 503.0,513.7 506.0,514.0 508.0,515.0 510.0,514.0 526.0,514.0 529.0,515.0 532.0,515.3 535.0,514.1 540.0,513.8 560.0,513.5 620.0,513.1 700.0,512.8 804.0,512.8" fill="none" stroke="#EAB839" stroke-width="2" stroke-linejoin="round"/>
<polyline points="485.0,573.0 804.0,573.0" fill="none" stroke="#6ED0E0" stroke-width="2" stroke-linejoin="round"/>
<polyline points="485.0,564.0 804.0,564.0" fill="none" stroke="#EF843C" stroke-width="2" stroke-linejoin="round"/>
<polyline points="485.0,573.0 602.0,573.0 612.0,571.5 620.5,569.8 625.0,567.6 797.7,537.8 800.5,539.3 804.0,538.8" fill="none" stroke="#E24D42" stroke-width="2" stroke-linejoin="round"/>
</svg>
<div class="yl" style="right:770.5px;top:408.5px">100.00%</div>
<div class="yl" style="right:770.5px;top:448.5px">75.00%</div>
<div class="yl" style="right:770.5px;top:488.5px">50.00%</div>
<div class="yl" style="right:770.5px;top:528.5px">25.00%</div>
<div class="yl" style="right:770.5px;top:569.5px">0%</div>
<div class="xl" style="left:511.5px;top:583.0px">20:30</div>
<div class="xl" style="left:618.5px;top:583.0px">20:40</div>
<div class="xl" style="left:724.5px;top:583.0px">20:50</div>
<div class="legend" style="left:456.5px;top:604.0px"><span class="li"><i style="background:#7EB26D"></i>/</span><span class="li"><i style="background:#EAB839"></i>/home</span><span class="li"><i style="background:#6ED0E0"></i>/opt</span><span class="li"><i style="background:#EF843C"></i>/srv</span><span class="li"><i style="background:#E24D42"></i>/tmp</span></div>
<div class="a" style="left:842px;top:408px;width:406px;height:2px;background:#141414"></div>
<div class="a" style="left:842px;top:410px;width:406px;height:24px;background:#242424;border-top:1px solid #2a2a2a"></div>
<div class="a" style="left:842px;top:434px;width:406px;height:2px;background:#141414"></div>
</body></html>
